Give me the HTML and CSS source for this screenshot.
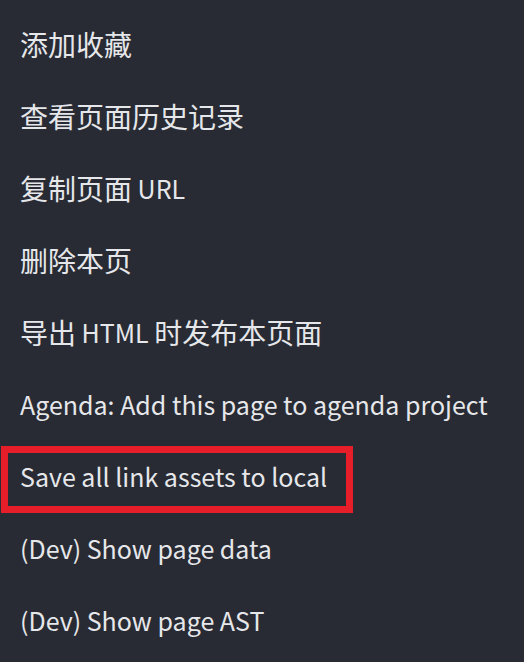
FILE: index.html
```html
<!DOCTYPE html>
<html lang="zh">
<head>
<meta charset="utf-8">
<link rel="stylesheet" href="styles.css">
</head>
<body>
<ul class="menu">
  <li class="item"><span class="cjk">添加收藏</span></li>
  <li class="item"><span class="cjk">查看页面历史记录</span></li>
  <li class="item"><span class="cjk">复制页面</span>&nbsp;URL</li>
  <li class="item"><span class="cjk">删除本页</span></li>
  <li class="item"><span class="cjk">导出</span>&nbsp;HTML&nbsp;<span class="cjk">时发布本页面</span></li>
  <li class="item">Agenda: Add this page to agenda project</li>
  <li class="item highlighted"><span class="frame">Save all link assets to local</span></li>
  <li class="item">(Dev) Show page data</li>
  <li class="item">(Dev) Show page AST</li>
</ul>
</body>
</html>
```

FILE: styles.css
```css
html, body {
  margin: 0;
  padding: 0;
  background: #282b33;
}
body {
  width: 524px;
  height: 662px;
  overflow: hidden;
  font-family: "Noto Sans CJK SC", "Noto Sans", sans-serif;
  color: #e6e7ea;
}
.menu {
  list-style: none;
  margin: 0;
  padding: 8px 0 0 0;
  display: flex;
  flex-direction: column;
}
.item {
  height: 72px;
  display: flex;
  align-items: center;
  padding-left: 20px;
  font-size: 25px;
  white-space: nowrap;
}
.cjk {
  font-size: 28px;
}
.highlighted {
  padding-left: 1px;
}
.frame {
  display: flex;
  align-items: center;
  height: 47px;
  margin-top: 6px;
  padding: 0 12px 6px 12px;
  border: 7px solid #e61e2a;
  width: 314px;
}
```
